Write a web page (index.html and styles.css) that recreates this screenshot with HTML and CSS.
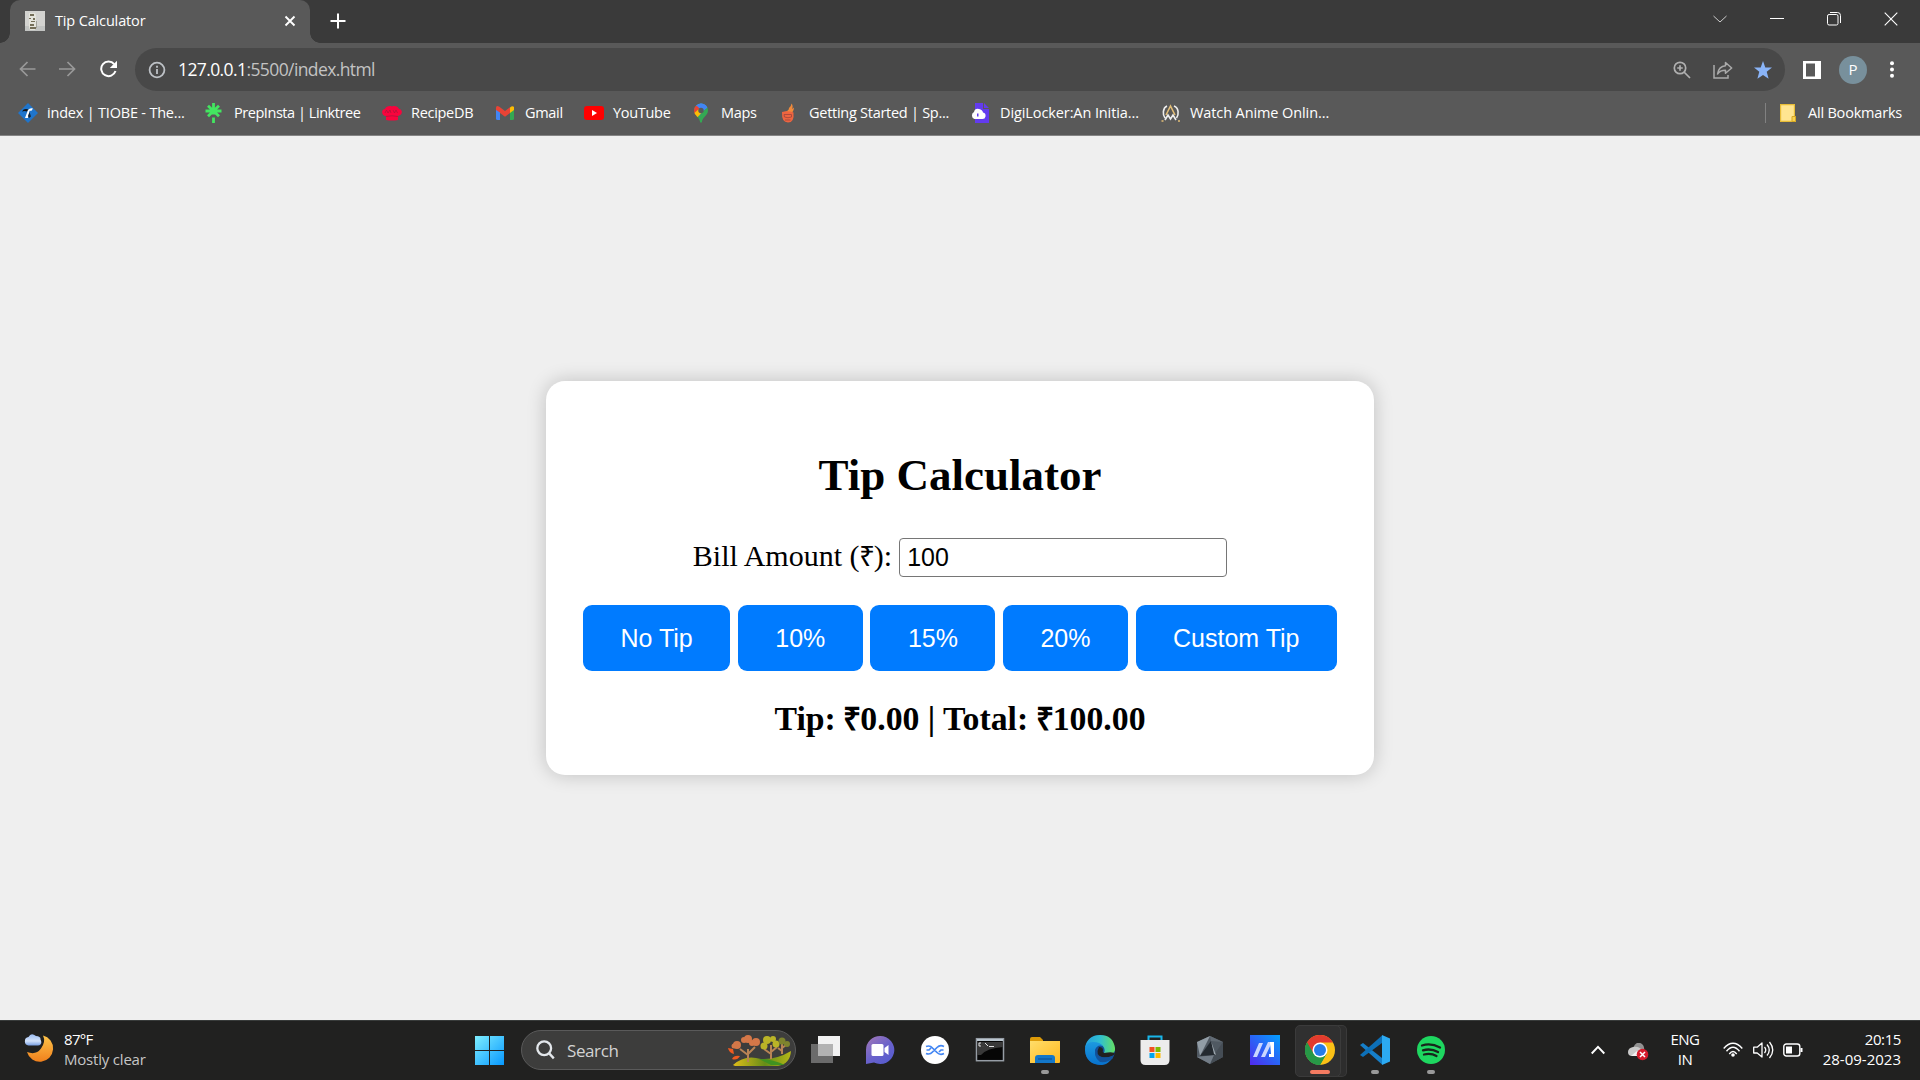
FILE: index.html
```html
<!DOCTYPE html>
<html lang="en">
<head>
<meta charset="utf-8">
<title>Tip Calculator</title>
<link rel="stylesheet" href="styles.css">
</head>
<body>
<header class="browser">
  <div class="tabstrip">
    <div class="tab">
      <svg class="favicon" width="20" height="20" viewBox="0 0 20 20"><rect width="20" height="20" fill="#d3d3d0"/><path d="M0 15h20v5H0z" fill="#c2c4c2"/><path d="M4 2h6l1 2v12l-1 3H5l-1-3z" fill="#e4e4dc"/><path d="M5 3h4v2H5zM4 7h2v1H4zm4 0h2v2H8zM6 10h4v1H6zm-1 3h4v2H5zm0 3h6v2H5z" fill="#746e58"/><path d="M11 10h1v7h-1z" fill="#a2a39a"/></svg>
      <span class="tab-title">Tip Calculator</span>
      <svg class="tab-close" width="12" height="12" viewBox="0 0 12 12" stroke="#fff" stroke-width="1.9"><path d="M1.500 1.500l9 9M10.500 1.500l-9 9"/></svg>
    </div>
    <svg class="new-tab" width="16" height="16" viewBox="0 0 16 16" stroke="#fff" stroke-width="2"><path d="M8 .5v15M.5 8h15"/></svg>
    <div class="window-controls">
      <svg width="14" height="14" viewBox="0 0 14 14" fill="none" stroke="#ccc" stroke-width="1"><path d="M.5 4l6.500 6L13.500 4"/></svg>
      <svg width="14" height="14" viewBox="0 0 14 14" stroke="#fff"><path d="M0 6.500h14"/></svg>
      <svg width="14" height="14" viewBox="0 0 14 14" fill="none" stroke="#fff" stroke-width="1"><rect x=".5" y="2.500" width="10.500" height="10.500" rx="1.600"/><path d="M3 .5h7.500a3 3 0 0 1 3 3V11"/></svg>
      <svg width="14" height="14" viewBox="0 0 14 14" stroke="#fff" stroke-width="1.100"><path d="M.7.700l12.600 12.600M13.300.7L.7 13.300"/></svg>
    </div>
  </div>
  <div class="toolbar">
    <nav class="nav-buttons">
      <svg width="18" height="16" viewBox="0 0 18 16" fill="none" stroke="#999" stroke-width="1.700"><path d="M17.500 8H2.500M9.500 1l-7 7 7 7"/></svg>
      <svg width="18" height="16" viewBox="0 0 18 16" fill="none" stroke="#999" stroke-width="1.700"><path d="M0 8h15.500M8.500 1l7 7-7 7"/></svg>
      <svg width="18" height="18" viewBox="0 0 18 18" fill="none" stroke="#fff" stroke-width="2"><path d="M14.200 4.200A7.300 7.300 0 1 0 15.500 11"/><path d="M17 .8V8H9.800z" fill="#fff" stroke="none"/></svg>
    </nav>
    <div class="omnibox">
      <svg width="18" height="18" viewBox="0 0 18 18" fill="none" stroke="#bdc1c6" stroke-width="1.800"><circle cx="9" cy="9" r="7.400"/><path d="M9 8v5M9 4.800v1.900"/></svg>
      <span class="url"><b>127.0.0.1</b><span>:5500/index.html</span></span>
      <div class="page-actions">
        <svg width="18" height="18" viewBox="0 0 18 18" fill="none" stroke="#b0b0b0" stroke-width="1.700"><circle cx="7" cy="7" r="5.700"/><path d="M11 11l6 6M7 4.200v5.600M4.200 7h5.600"/></svg>
        <svg width="20" height="18" viewBox="0 0 20 18" fill="none" stroke="#aaa" stroke-width="1.500"><path d="M1 4v13h14v-3"/><path d="M12.500 1.500L18.700 7l-6.200 5.300V9.200C9 9.200 6.500 10 4.500 13c.7-4.500 3.200-7.700 8-8.200z" stroke-linejoin="round"/></svg>
        <svg width="18" height="18" viewBox="0 0 18 18" fill="#8ab4f8"><path d="M9 0l2.300 6.500 6.700.1-5.300 4.200 1.900 7L9 13.900l-5.600 3.900 1.900-7L0 6.600l6.700-.1z"/></svg>
      </div>
    </div>
    <svg class="side-panel" width="18" height="18" viewBox="0 0 18 18"><path fill="#fff" fill-rule="evenodd" d="M0 0h18v18H0zM3 2.500v13h9v-13z"/></svg>
    <span class="avatar">P</span>
    <svg class="menu" width="4" height="17" viewBox="0 0 4 17" fill="#fff"><circle cx="2" cy="2.200" r="2"/><circle cx="2" cy="8.500" r="2"/><circle cx="2" cy="14.800" r="2"/></svg>
  </div>
  <div class="bookmarks">
    <a class="bookmark"><svg width="20" height="20" viewBox="0 0 20 20"><path d="M10 0l10 10-10 10L0 10z" fill="#1f75cc"/><path d="M4 8.500Q6 5 10.500 6.500L9 8.500Q6.500 7.500 4 8.500z" fill="#111"/><path d="M7 15l3-8q2-2.500 5-1.500l-1.500 2.300h-2L10 15z" fill="#fff"/><path d="M11.500 9l1.500 4.500-2 1.500-1-2z" fill="#152536"/></svg><span class="t1">index | TIOBE - The...</span></a>
    <a class="bookmark"><svg width="20" height="20" viewBox="0 0 20 20" stroke="#43e660" stroke-width="2.800"><path d="M8.500 0v11.500M.500 8h16M3 2.800l11 10.500M14 2.800L3 13.300M8.500 14.500V20"/></svg><span class="t2">PrepInsta | Linktree</span></a>
    <a class="bookmark"><svg width="20" height="20" viewBox="0 0 20 20" fill="#f8043d"><path d="M4 17v-4C-1 13-1 6 3 6c1-3 5-3.500 7-2.500 3-1 6 0 7 2.500 4 .5 4 6-1 7v4q-6 1-12 0z"/><path d="M3 10l1.500-3L6 10l2-3 1 3m2-3l1.500 3L14 7l1.500 3M4 13.500q6-1.500 12 0" fill="none" stroke="#a3163b" stroke-width=".7"/></svg><span class="t3">RecipeDB</span></a>
    <a class="bookmark"><svg width="20" height="20" viewBox="0 0 20 20"><path d="M0 5l4 3v9H1.500Q0 17 0 15.500z" fill="#4285f4"/><path d="M14 8l4-3v10.500q0 1.500-1.500 1.500H14z" fill="#34a853"/><path d="M14 4.500q2.500-2 4-.5v3l-4 3z" fill="#fbbc04"/><path d="M0 5q0-3 3-1.500L9 8l5-3.800V10l-5 3.800L4 10v-.5L0 7z" fill="#ea4335"/></svg><span class="t4">Gmail</span></a>
    <a class="bookmark"><svg width="20" height="20" viewBox="0 0 20 20"><rect y="3" width="20" height="14" rx="3" fill="#f00"/><path d="M8 7l5 3-5 3z" fill="#fff"/></svg><span class="t5">YouTube</span></a>
    <a class="bookmark"><svg width="20" height="20" viewBox="0 0 20 20"><clipPath id="pin"><path d="M9 .5a7 7 0 0 1 7 7c0 5-5.500 6-6.200 12H8.200C7.500 13.500 2 12.500 2 7.500a7 7 0 0 1 7-7z"/></clipPath><g clip-path="url(#pin)"><path d="M0 0h20v20H0z" fill="#34a853"/><path d="M3 0h15L7 13z" fill="#4285f4"/><path d="M0 2l5 1 4 4-7 8z" fill="#ea4335"/><path d="M0 12l8-7 3 3-7 8z" fill="#fbbc04"/><path d="M8 0h7l1.500 4L11 8 7 6z" fill="#4285f4"/></g><circle cx="9" cy="7.500" r="2.700" fill="#595959"/></svg><span class="t6">Maps</span></a>
    <a class="bookmark"><svg width="20" height="20" viewBox="0 0 20 20"><path d="M4 9q5-1 5-4 2-1 2.500-4.500Q13.500 3 12 6l2-1.500q0 3-2 5.500z" fill="#f18a3b"/><path d="M2 9q6-1.500 11.500.5Q14.500 19.500 8 19.500 1.500 19.500 2 9z" fill="#ee6540"/><path d="M4 11.500h7.500v2.500q-3.500 1.500-7 0zM5 17h5.500" fill="none" stroke="#ad4b3c"/></svg><span class="t7">Getting Started | Sp...</span></a>
    <a class="bookmark"><svg width="20" height="20" viewBox="0 0 20 20"><path d="M4 0h8v6h6v14H4zM13 0l5 5h-5z" fill="#633bee"/><path d="M3.500 16A3.800 3.800 0 0 1 3 9q1-4 5-3 3.500.5 4 3.500 3 .5 2.500 4-.5 2.500-3 2.500z" fill="#fff"/><path d="M6 10.500h1.500v3H6z" fill="#633bee"/></svg><span class="t8">DigiLocker:An Initia...</span></a>
    <a class="bookmark"><svg width="20" height="20" viewBox="0 0 20 20" fill="none" stroke-width="1.600"><path d="M5 12l4.500-9 4.500 9" stroke="#e2bd76"/><path d="M6 3C1.500 5 1.500 12 4 15M13 3c5 2 5 9 2.500 12M4 17l3-5 2.500 4 2.500-4 3 5" stroke="#eee"/><path d="M.5 18h2m14.500 0h2" stroke="#e2bd76"/></svg><span class="t9">Watch Anime Onlin...</span></a>
    <a class="bookmark all"><svg width="16" height="18" viewBox="0 0 16 18"><path d="M.6.600h13.800v12l1 .5v4.300H.6z" fill="#ffe591" stroke="#e8bd37" stroke-width="1.200"/><path d="M12 12.500h3.500v5H12z" fill="#fad24f" stroke="#d7a924"/></svg><span class="t10">All Bookmarks</span></a>
  </div>
</header>

<main class="page">
  <section class="card">
    <h2 class="title">Tip Calculator</h2>
    <div class="bill"><label for="bill">Bill Amount (<span class="rupee">₹</span>):</label><input id="bill" type="text" value="100"></div>
    <div class="buttons"><button>No Tip</button><button>10%</button><button>15%</button><button>20%</button><button>Custom Tip</button></div>
    <p class="result">Tip: <span class="rupee">₹</span>0.00 | Total: <span class="rupee">₹</span>100.00</p>
  </section>
</main>

<footer class="taskbar">
  <div class="weather">
    <svg width="30" height="30" viewBox="0 0 30 30"><defs><linearGradient id="moon" x2="0" y2="1"><stop stop-color="#ffc54a"/><stop offset="1" stop-color="#f0801c"/></linearGradient><linearGradient id="cloud" x2="0" y2="1"><stop stop-color="#9bbcf2"/><stop offset=".6" stop-color="#d2e2fb"/><stop offset="1" stop-color="#789fe3"/></linearGradient></defs><path d="M19 2.500A13.300 13.300 0 1 1 3 19q9 3.500 14-3.500T19 2.500z" fill="url(#moon)"/><path d="M4.500 12.500a4.300 4.300 0 0 1 0-8.500Q7-1 12 3q5 .5 4.500 3.500 2.500 5-2.500 6z" fill="url(#cloud)"/></svg>
    <div class="weather-text"><span class="temp">87°F</span><span class="sky">Mostly clear</span></div>
  </div>
  <svg class="start" width="29" height="29" viewBox="0 0 29 29"><defs><linearGradient id="win" gradientUnits="userSpaceOnUse" x2="29" y2="29"><stop stop-color="#7eeeff"/><stop offset="1" stop-color="#0798ff"/></linearGradient></defs><path d="M0 0h14v14H0zM15 0h14v14H15zM0 15h14v14H0zM15 15h14v14H15z" fill="url(#win)"/></svg>
  <div class="search">
    <svg width="19" height="20" viewBox="0 0 19 20" fill="none" stroke="#e3e7eb" stroke-width="2.300"><circle cx="8.200" cy="8.200" r="6.900"/><path d="M13.200 13.400l4.600 5"/></svg>
    <span>Search</span>
    <svg class="trees" width="64" height="32" viewBox="0 0 64 32"><defs><linearGradient id="hill" x2="1"><stop stop-color="#e0bd19"/><stop offset=".55" stop-color="#668d18"/><stop offset="1" stop-color="#b5b717"/></linearGradient></defs><path d="M5 30Q17 19 33 24q15 1 30-8-1 13-13 15H7z" fill="url(#hill)"/><path d="M31 24q12 0 26 6H43z" fill="#409220"/><path d="M20 27V14m0 6l-8-6m8 5l7-7M43 24V10m0 9l-7-5m7 3l6-5M54 19V8m0 8l-4-3m4 0l4-3" fill="none" stroke="#b98455" stroke-width="2"/><g fill="#d47748"><circle cx="9" cy="10" r="4"/><circle cx="16" cy="5" r="3"/><circle cx="20" cy="4" r="4"/><circle cx="28" cy="7" r="4"/><circle cx="24" cy="8" r="3"/><circle cx="6" cy="11" r="2.500"/></g><g fill="#bab427"><circle cx="36" cy="11" r="3.500"/><circle cx="39" cy="5" r="4"/><circle cx="45" cy="4" r="3"/><circle cx="48" cy="9" r="3.500"/></g><g fill="#7e842d"><circle cx="54" cy="6" r="3.500"/><circle cx="59" cy="9" r="3"/></g><path d="M0 13l5 1 1 5q-5-1-6-6zm4 11q2-4 8-3-3 5-8 3z" fill="#ef5a20"/></svg>
  </div>
  <div class="apps">
    <span class="app"><svg width="30" height="30" viewBox="0 0 30 30"><path d="M8 1h22v20H8z" fill="#f1f1f1"/><path d="M1 9h22v19H1z" fill="#6b6b6b"/><path d="M8 9h15v12H8z" fill="#b2b2b2"/></svg></span>
    <span class="app"><svg width="30" height="30" viewBox="0 0 30 30"><defs><linearGradient id="chat" x1=".1" x2=".9" y2="1"><stop stop-color="#a077b8"/><stop offset=".5" stop-color="#6b62ca"/><stop offset="1" stop-color="#535bd0"/></linearGradient></defs><path d="M15 1a14 14 0 1 1-6 26.500L1 29V15A14 14 0 0 1 15 1z" fill="url(#chat)"/><rect x="6.500" y="9" width="12" height="12" rx="1.500" fill="#fff"/><path d="M19.500 13l4-3v10l-4-3z" fill="#fff"/></svg></span>
    <span class="app"><svg width="30" height="30" viewBox="0 0 30 30"><circle cx="15" cy="15" r="14" fill="#fff"/><path d="M6 11.500q4-1.500 6.500 1.500l4.500 4.500q3 3 7 1M6 18.500q4 1.500 6.500-1.500l4.500-4.500q3-3 7-1M6.500 15h2.500l2-2M23.500 15H21l-2 2" fill="none" stroke="#4386f3" stroke-width="1.700"/></svg></span>
    <span class="app"><svg width="30" height="30" viewBox="0 0 30 30"><rect x="1.500" y="3.700" width="27" height="22" fill="#060606" stroke="#969da5" stroke-width="1.500"/><path d="M2 4h26v2H2z" fill="#bac5ce"/><path d="M2 7h26v5Q12 13 6 20H2z" fill="#393939"/><path d="M6 8H4v3h2M8 8.500v.1M8 11v.1M10 8l3 3M14 11.500h5" stroke="#e3e3e3" fill="none"/></svg></span>
    <span class="app running"><svg width="30" height="30" viewBox="0 0 30 30"><defs><linearGradient id="folder" x2="1" y2="1"><stop stop-color="#ffdd6a"/><stop offset="1" stop-color="#ffb91f"/></linearGradient></defs><path d="M0 4q0-2 2-2h8l3 3v5H0z" fill="#dd9b08"/><path d="M0 6h30v21q0 1-1 1H0z" fill="url(#folder)"/><path d="M5 28v-5q0-3 3-3h14q3 0 3 3v5z" fill="#1377c9"/><path d="M8 24h14" stroke="#0a4c91"/></svg></span>
    <span class="app"><svg width="30" height="30" viewBox="0 0 30 30"><defs><linearGradient id="edgeTop"><stop stop-color="#249fdf"/><stop offset=".5" stop-color="#30bfd0"/><stop offset="1" stop-color="#65df62"/></linearGradient><linearGradient id="edgeLow" x2="0" y2="1"><stop stop-color="#1c99df"/><stop offset="1" stop-color="#0872cd"/></linearGradient></defs><circle cx="15" cy="15" r="15" fill="#124f98"/><path d="M0 12Q3 0 15 0q13 0 15 13c1 7-8 8-11 5 2-4-1-10-8-9Q5 9 0 12z" fill="url(#edgeTop)"/><path d="M0 15Q0 7 8 7q7 0 10 4-6-2-8 4-1 9 8 10 5 0 9-3-3 7-10 8Q1 30 0 15z" fill="url(#edgeLow)"/><path d="M14 12q-4 8 3 10 7 2 13-3-1-3-11-1-2-1-1-3 0-3-4-3z" fill="#212121"/><path d="M11 14q-1 6 5 8 6 1 11-1l1 2q-5 5-13 4-7-5-4-13z" fill="#12539c"/></svg></span>
    <span class="app"><svg width="30" height="30" viewBox="0 0 30 30"><path d="M8.500 7V1.500h13V7" fill="none" stroke="#19b6e9" stroke-width="2"/><path d="M.500 5h29v20q0 5-5 5h-19q-5 0-5-5z" fill="#ececec"/><path d="M9.500 12h5v5h-5z" fill="#f25022"/><path d="M15.500 12h5v5h-5z" fill="#7fba00"/><path d="M9.500 18h5v5h-5z" fill="#00a4ef"/><path d="M15.500 18h5v5h-5z" fill="#ffb900"/></svg></span>
    <span class="app"><svg width="30" height="30" viewBox="0 0 30 30"><path d="M15 1l13 6v15l-13 7-13-7V7z" fill="#505962"/><path d="M15 1l13 6-12-1z" fill="#626b74"/><path d="M15 1L2 7l3 14z" fill="#929da6"/><path d="M28 7v15l-13 7 4-9z" fill="#454d55"/><path d="M2 22l17-2-4 9z" fill="#737d87"/><path d="M16 6L5 21l15-1z" fill="#242a30"/><path d="M16 6l5 14-2-1z" fill="#9ba5ad"/></svg></span>
    <span class="app"><svg width="30" height="30" viewBox="0 0 30 30"><defs><linearGradient id="asus" x1="0" y1="1" x2="1" y2="0"><stop stop-color="#5228ed"/><stop offset="1" stop-color="#02a0ff"/></linearGradient></defs><path d="M0 0h30v30H0z" fill="url(#asus)"/><path d="M9 8h4L7 22H3zM18 7h4l-7 15h-4z" fill="#c9d6ff"/><path d="M20 7h4v15h-5v-3h2z" fill="#fff"/></svg></span>
    <span class="app active"><svg width="30" height="30" viewBox="0 0 30 30"><circle cx="15" cy="15" r="15" fill="#fbc116"/><path d="M15 15L2 7.500A15 15 0 0 1 28 7.500H15z" fill="#e33b2e"/><path d="M2 7.500A15 15 0 0 0 15 30l6.500-11.250L15 15z" fill="#279847"/><path d="M2 7.500l6.500 11.300L15 7.500z" fill="#e33b2e"/><path d="M2 7.500L8.500 18.700 15 22l6.500-3.200L15 30A15 15 0 0 1 2 7.500z" fill="#279847"/><circle cx="15" cy="15" r="7.500" fill="#fff"/><circle cx="15" cy="15" r="6" fill="#277ce9"/></svg></span>
    <span class="app running"><svg width="30" height="30" viewBox="0 0 30 30"><path d="M0 10l3-2 19 15v6.500z" fill="#167fc9"/><path d="M0 20l3 2L22 8V.5z" fill="#0d70b8"/><path d="M22 0l8 3.500v23L22 30z" fill="#2caaf2"/></svg></span>
    <span class="app running"><svg width="30" height="30" viewBox="0 0 30 30"><circle cx="15" cy="15" r="14" fill="#1ed760"/><path d="M6 10.500q9-2.800 18 2M7 15.300q8-2.200 15 1.800M8 19.500q7-1.700 12.500 1.500" fill="none" stroke="#18251c" stroke-width="2.300" stroke-linecap="round"/></svg></span>
  </div>
  <div class="tray">
    <svg width="14" height="10" viewBox="0 0 14 10" fill="none" stroke="#fff" stroke-width="1.900"><path d="M.7 8.500L7 1.800l6.300 6.700"/></svg>
    <svg class="onedrive" width="22" height="18" viewBox="0 0 22 18"><path d="M5 5q4-9 10-3 3 5-2 8z" fill="#929292"/><path d="M4 13Q0 13 0 9t5-5q7-1 9 4v5z" fill="#c9c9c9"/><path d="M3 13l6-5 4 5z" fill="#f2f2f2"/><circle cx="14.500" cy="11.500" r="5.800" fill="#d51c2c"/><path d="M12 9l5 5m0-5l-5 5" stroke="#fff" stroke-width="1.500"/></svg>
    <span class="lang"><span>ENG</span><span>IN</span></span>
    <svg class="wifi" width="20" height="16" viewBox="0 0 20 16" fill="none" stroke="#fff" stroke-width="1.400"><path d="M.7 6.500Q10-4 19.300 6.500M3.500 9.300q6.500-8 13 0M6.300 12q3.700-5 7.400 0"/><circle cx="10" cy="13" r="1.800" fill="#fff" stroke="none"/></svg>
    <svg class="volume" width="21" height="18" viewBox="0 0 21 18" fill="none" stroke="#fff" stroke-width="1.300" stroke-linejoin="round"><path d="M.7 6.200h3.500L9 2v14l-4.800-4H.7zM11.500 6q2.500 3 0 6M14 3.500q4.500 5.500 0 11M16.500 1q6.500 8 0 16"/></svg>
    <svg class="battery" width="20" height="14" viewBox="0 0 20 14" fill="none" stroke="#fff" stroke-width="1.400"><rect x=".8" y="1" width="16" height="12" rx="2.500"/><path d="M3 3.500h6v7H3z" fill="#fff" stroke="none"/><path d="M18.500 5v4" stroke-width="2"/></svg>
    <span class="clock"><span>20:15</span><span class="date">28-09-2023</span></span>
  </div>
</footer>
</body>
</html>
```
FILE: styles.css
```css
* { box-sizing: border-box; }
body {
  margin: 0;
  width: 1920px;
  height: 1080px;
  overflow: hidden;
  display: flex;
  flex-direction: column;
  font-family: "Open Sans", "Noto Sans", sans-serif;
  font-size: 15px;
  color: #fff;
}
svg { display: block; flex: none; }
span { white-space: nowrap; }

/* Browser window */
.browser { height: 136px; background: #595959; border-bottom: 1px solid #858585; flex: none; }
.tabstrip { height: 43px; background: #3a3a3a; display: flex; padding-left: 10px; }
.tab {
  width: 300px;
  height: 43px;
  background: #595959;
  border-radius: 10px 10px 0 0;
  display: flex;
  align-items: center;
  padding: 0 14px 1px 15px;
  position: relative;
}
.tab::before, .tab::after {
  content: "";
  position: absolute;
  bottom: 0;
  width: 10px;
  height: 10px;
}
.tab::before { left: -10px; background: radial-gradient(circle at 0 0, #3a3a3a 9.500px, #595959 10px); }
.tab::after { right: -10px; background: radial-gradient(circle at 100% 0, #3a3a3a 9.500px, #595959 10px); }
.tab-title { margin-left: 10px; font-size: 14.500px; letter-spacing: -.15px; line-height: 20px; padding-bottom: 1px; }
.tab-close { margin-left: auto; }
.new-tab { margin: 13px 0 0 20px; }
.window-controls { margin-left: auto; display: flex; gap: 43px; padding: 12px 22px 0 0; }
.toolbar { height: 53px; display: flex; align-items: center; }
.nav-buttons { width: 135px; padding: 0 0 2px 18px; display: flex; align-items: center; gap: 23px; }
.omnibox {
  width: 1650px;
  height: 43px;
  border-radius: 22px;
  background: #484848;
  display: flex;
  align-items: center;
  padding: 0 13px;
}
.url { margin-left: 12px; padding-bottom: 1px; font-size: 17.500px; letter-spacing: -.6px; color: #c3c3c3; }
.url b { font-weight: 400; color: #fff; }
.page-actions { margin-left: auto; display: flex; align-items: center; gap: 21.500px; }
.side-panel { margin-left: 18px; }
.avatar {
  width: 28px;
  height: 28px;
  margin-left: 18px;
  border-radius: 50%;
  background: #78909c;
  font-size: 15px;
  line-height: 27px;
  text-align: center;
}
.menu { margin-left: 23px; }
.bookmarks {
  height: 34px;
  display: grid;
  grid-template-columns: 187px 177px 114px 88px 108px 88px 191px 190px 575px auto;
  align-items: center;
  padding-left: 18px;
}
.bookmark { display: flex; align-items: center; gap: 9px; font-size: 14.500px; line-height: 20px; }
.bookmark span { padding-bottom: 1px; }
.all { height: 20px; gap: 12px; padding-left: 14px; margin-left: 29px; border-left: 1px solid #818181; }

/* Calculator page */
.page {
  flex: 1;
  background: #efefef;
  color: #000;
  display: flex;
  justify-content: center;
  align-items: center;
  font-family: "Liberation Serif", serif;
}
.card {
  width: 828px;
  height: 394px;
  padding: 68px 37px 0;
  background: #fff;
  border-radius: 19px;
  box-shadow: 0 0 19px rgba(0, 0, 0, .2);
  text-align: center;
}
.title { margin: 0; font-size: 45px; line-height: 52px; }
.bill { display: flex; justify-content: center; gap: 7px; margin-top: 37px; font-size: 30px; line-height: 36px; }
.bill input {
  width: 328px;
  height: 39px;
  padding: 0 7px;
  border: 1px solid #767676;
  border-radius: 4px;
  font: 25px "Liberation Sans", sans-serif;
}
/* Currency sign, slightly condensed by side margins */
.rupee { font-size: .94em; line-height: 1; margin: 0 -.03em; }
.buttons { display: flex; justify-content: space-between; margin-top: 28px; }
.buttons button {
  height: 66px;
  padding: 0 37.500px;
  border: 0;
  border-radius: 9px;
  background: #007bff;
  color: #fff;
  font: 25px "Liberation Sans", sans-serif;
}
.result { margin: 28px 0 0; font-size: 33.750px; line-height: 39px; font-weight: 700; }

/* Taskbar */
.taskbar { height: 60px; padding-bottom: 1px; flex: none; background: #212120; border-top: 1px solid #383b3a; display: flex; align-items: center; }
.weather { width: 475px; padding-left: 24px; display: flex; align-items: center; gap: 10px; }
.weather svg { margin-top: -4px; }
.weather-text { display: flex; flex-direction: column; line-height: 20px; padding-bottom: 2px; }
.temp { letter-spacing: -.7px; }
.sky { color: #c6c6c6; letter-spacing: -.2px; }
.search {
  width: 275px;
  height: 40px;
  margin-left: 17px;
  padding-left: 14px;
  border: 1px solid #5a5a5a;
  border-radius: 20px;
  background: #3d3d3c;
  color: #d3d3d3;
  font-size: 17px;
  display: flex;
  align-items: center;
  gap: 12px;
}
.search span { letter-spacing: -.4px; }
.trees { margin-left: auto; margin-right: 3px; margin-top: 2px; }
.apps { display: flex; margin-left: 1.500px; }
.app { width: 55.050px; height: 50px; display: flex; align-items: center; justify-content: center; position: relative; }
.running::after, .active::after {
  content: "";
  position: absolute;
  left: 50%;
  bottom: 1px;
  width: 8px;
  height: 4px;
  margin-left: -4px;
  border-radius: 2px;
  background: #999;
}
.active::before {
  content: "";
  position: absolute;
  left: 2.500px;
  top: 0;
  width: 44px;
  height: 50px;
  border: 1px solid #3b3b3b;
  border-radius: 5px;
  background: #303030;
  box-shadow: 6px 0 0 -1px #2d2d2d, 6px 0 0 #3a3a3a;
}
.active svg { position: relative; }
.active::after { width: 20px; margin-left: -10px; background: #f47b61; }
.tray { margin-left: auto; padding-right: 19px; display: flex; align-items: center; }
.onedrive { margin: 3px 0 0 23px; }
.lang { width: 40px; margin-left: 15px; padding-bottom: 2px; display: flex; flex-direction: column; line-height: 20px; text-align: center; letter-spacing: -.5px; }
.wifi { margin-left: 18px; }
.volume { margin-left: 10px; }
.battery { margin-left: 9px; }
.clock { width: 88px; margin-left: 10px; padding-bottom: 2px; display: flex; flex-direction: column; align-items: flex-end; line-height: 20px; letter-spacing: -.4px; }
.date { letter-spacing: 0; }

/* Label tracking */
.t3, .t4, .t5, .t6 { letter-spacing: -.3px; }
.t2 { letter-spacing: -.45px; }
.t7 { letter-spacing: -.27px; }
.t1, .t10 { letter-spacing: -.2px; }
.t8, .t9 { letter-spacing: -.1px; }
```
